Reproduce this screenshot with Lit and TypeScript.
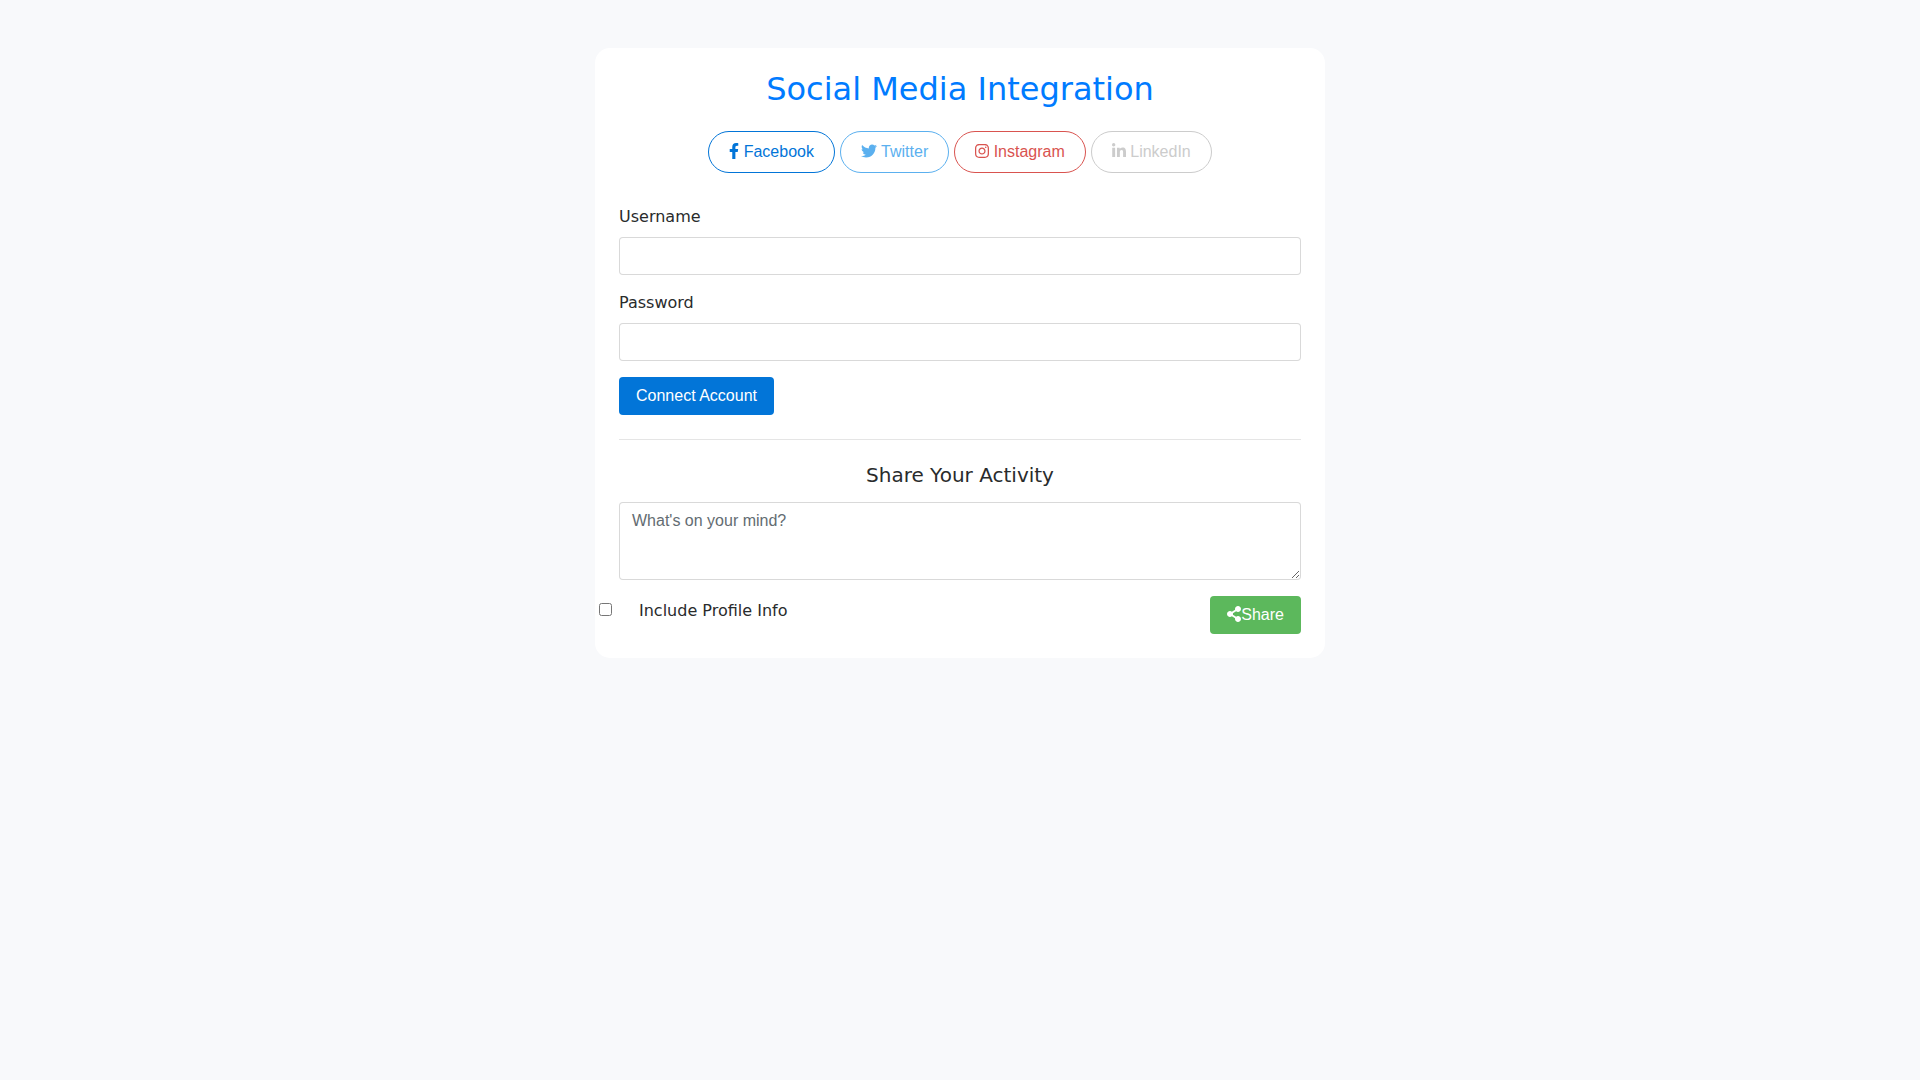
import { LitElement, html, css, svg } from "lit";
import { customElement } from "lit/decorators.js";

interface Icon {
  width: number;
  path: string;
}

// Each glyph is drawn on a 512-unit tall grid; width is in the same units.
const icons: Record<string, Icon> = {
  facebook: {
    width: 320,
    path: "M279.14 288l14.22-92.66h-88.91v-60.13c0-25.35 12.42-50.06 52.24-50.06h40.42V6.26S260.43 0 225.36 0c-73.22 0-121.08 44.38-121.08 124.72v70.62H22.89V288h81.39v224h100.17V288z",
  },
  twitter: {
    width: 512,
    path: "M459.37 151.716c.325 4.548.325 9.097.325 13.645 0 138.72-105.583 298.558-298.558 298.558-59.452 0-114.68-17.219-161.137-47.106 8.447.974 16.568 1.299 25.34 1.299 49.055 0 94.213-16.568 130.274-44.832-46.132-.975-84.792-31.188-98.112-72.772 6.498.974 12.995 1.624 19.818 1.624 9.421 0 18.843-1.3 27.614-3.573-48.081-9.747-84.143-51.98-84.143-102.985v-1.299c13.969 7.797 30.214 12.67 47.431 13.319-28.264-18.843-46.781-51.005-46.781-87.391 0-19.492 5.197-37.36 14.294-52.954 51.655 63.675 129.3 105.258 216.365 109.807-1.624-7.797-2.599-15.918-2.599-24.04 0-57.828 46.782-104.934 104.934-104.934 30.213 0 57.502 12.67 76.67 33.137 23.715-4.548 46.456-13.32 66.599-25.34-7.798 24.366-24.366 44.833-46.132 57.827 21.117-2.273 41.584-8.122 60.426-16.243-14.292 20.791-32.161 39.308-52.628 54.253z",
  },
  instagram: {
    width: 448,
    path: "M224.1 141c-63.6 0-114.9 51.3-114.9 114.9s51.3 114.9 114.9 114.9S339 319.5 339 255.9 287.7 141 224.1 141zm0 189.6c-41.1 0-74.7-33.5-74.7-74.7s33.5-74.7 74.7-74.7 74.7 33.5 74.7 74.7-33.6 74.7-74.7 74.7zm146.4-194.3c0 14.9-12 26.8-26.8 26.8-14.9 0-26.8-12-26.8-26.8s12-26.8 26.8-26.8 26.8 12 26.8 26.8zm76.1 27.2c-1.7-35.9-9.9-67.7-36.2-93.9-26.2-26.2-58-34.4-93.9-36.2-37-2.1-147.9-2.1-184.9 0-35.8 1.7-67.6 9.9-93.9 36.1s-34.4 58-36.2 93.9c-2.1 37-2.1 147.9 0 184.9 1.7 35.9 9.9 67.7 36.2 93.9s58 34.4 93.9 36.2c37 2.1 147.9 2.1 184.9 0 35.9-1.7 67.7-9.9 93.9-36.2 26.2-26.2 34.4-58 36.2-93.9 2.1-37 2.1-147.8 0-184.8zM398.8 388c-7.8 19.6-22.9 34.7-42.6 42.6-29.5 11.7-99.5 9-132.1 9s-102.7 2.6-132.1-9c-19.6-7.8-34.7-22.9-42.6-42.6-11.7-29.5-9-99.5-9-132.1s-2.6-102.7 9-132.1c7.8-19.6 22.9-34.7 42.6-42.6 29.5-11.7 99.5-9 132.1-9s102.7-2.6 132.1 9c19.6 7.8 34.7 22.9 42.6 42.6 11.7 29.5 9 99.5 9 132.1s2.7 102.7-9 132.1z",
  },
  linkedin: {
    width: 448,
    path: "M100.28 448H7.4V148.9h92.88zM53.79 108.1C24.09 108.1 0 83.5 0 53.8a53.79 53.79 0 0 1 107.58 0c0 29.7-24.1 54.3-53.79 54.3zM447.9 448h-92.68V302.4c0-34.7-.7-79.2-48.29-79.2-48.29 0-55.69 37.7-55.69 76.7V448h-92.78V148.9h89.08v40.8h1.3c12.4-23.5 42.69-48.3 87.88-48.3 94 0 111.28 61.9 111.28 142.3V448z",
  },
  share: {
    width: 448,
    path: "M352 320c-22.608 0-43.387 7.819-59.79 20.895l-102.486-64.054a96.551 96.551 0 0 0 0-41.683l102.486-64.054C308.613 184.181 329.392 192 352 192c53.019 0 96-42.981 96-96S405.019 0 352 0s-96 42.981-96 96c0 7.158.79 14.13 2.276 20.841L155.79 180.895C139.387 167.819 118.608 160 96 160c-53.019 0-96 42.981-96 96s42.981 96 96 96c22.608 0 43.387-7.819 59.79-20.895l102.486 64.054A96.301 96.301 0 0 0 256 416c0 53.019 42.981 96 96 96s96-42.981 96-96-42.981-96-96-96z",
  },
};

const networks = [
  { id: "facebook", name: "Facebook" },
  { id: "twitter", name: "Twitter" },
  { id: "instagram", name: "Instagram" },
  { id: "linkedin", name: "LinkedIn" },
];

function icon(name: string) {
  const { width, path } = icons[name];
  return html`<svg class="icon" viewBox="0 0 ${width} 512" aria-hidden="true">${svg`<path d=${path}></path>`}</svg>`;
}

@customElement("app-root")
export class AppRoot extends LitElement {
  static styles = css`
    :host {
      display: flex;
      justify-content: center;
      align-items: flex-start;
      box-sizing: border-box;
      min-height: 100vh;
      padding: 48px 16px;
      background: #f8f9fb;
      color: #292b2c;
      font-family: "DejaVu Sans", sans-serif;
      font-size: 16px;
      line-height: 24px;
    }
    *,
    *::before,
    *::after {
      box-sizing: border-box;
    }
    .card {
      flex: 0 1 730px;
      min-width: 0;
      padding: 24px;
      border-radius: 15px;
      background: #fff;
    }
    h2,
    h5 {
      margin: 0;
      font-weight: 500;
      text-align: center;
    }
    h2 {
      margin-bottom: 24px;
      color: #007bff;
      font-size: 32px;
      line-height: 35px;
    }
    h5 {
      margin-bottom: 16px;
      font-size: 20px;
      line-height: 22px;
    }
    .networks {
      display: flex;
      flex-wrap: wrap;
      justify-content: center;
      gap: 5px;
      margin-bottom: 32px;
    }
    button {
      padding: 8px 16px;
      border: 1px solid transparent;
      border-radius: 4px;
      color: #fff;
      font-family: "Liberation Sans", Arial, sans-serif;
      font-size: 16px;
      line-height: 20px;
      white-space: nowrap;
      cursor: pointer;
    }
    .network {
      padding: 10px 20px;
      border-color: currentColor;
      border-radius: 30px;
      background: transparent;
    }
    .facebook {
      color: #0275d8;
    }
    .twitter {
      color: #5bb0ef;
    }
    .instagram {
      color: #d9534f;
    }
    .linkedin {
      color: #ccc;
    }
    .primary {
      background: #0275d8;
    }
    .success {
      background: #5cb85c;
    }
    .icon {
      height: 16px;
      vertical-align: -2px;
      fill: currentColor;
    }
    .group {
      display: flex;
      flex-direction: column;
      gap: 8px;
      margin-bottom: 16px;
    }
    .control {
      display: block;
      width: 100%;
      padding: 8px 12px;
      border: 1px solid rgba(0, 0, 0, 0.15);
      border-radius: 4px;
      background: #fff;
      color: #464a4c;
      font-family: "Liberation Sans", Arial, sans-serif;
      font-size: 16px;
      line-height: 20px;
    }
    .control::placeholder {
      color: #636c72;
      opacity: 1;
    }
    textarea.control {
      margin-bottom: 16px;
      resize: vertical;
    }
    hr {
      margin: 24px 0;
      border: 0;
      border-top: 1px solid rgba(0, 0, 0, 0.1);
    }
    .actions {
      display: flex;
      justify-content: space-between;
      align-items: flex-start;
    }
    .check {
      display: flex;
      align-items: baseline;
      gap: 27px;
      margin-left: -20px;
      padding-top: 3px;
    }
    .check input {
      width: 13px;
      height: 13px;
      margin: 0;
    }
  `;

  private onSubmit(event: Event) {
    event.preventDefault();
  }

  render() {
    return html`
      <main class="card">
        <h2>Social Media Integration</h2>
        <div class="networks">
          ${networks.map(
            ({ id, name }) =>
              html`<button type="button" class="network ${id}">${icon(id)} ${name}</button>`
          )}
        </div>
        <form @submit=${this.onSubmit}>
          <div class="group">
            <label for="username">Username</label>
            <input class="control" id="username" type="text" />
          </div>
          <div class="group">
            <label for="password">Password</label>
            <input class="control" id="password" type="password" />
          </div>
          <button type="submit" class="primary">Connect Account</button>
        </form>
        <hr />
        <h5 id="share-title">Share Your Activity</h5>
        <form @submit=${this.onSubmit}>
          <textarea
            class="control"
            rows="3"
            placeholder="What's on your mind?"
            aria-labelledby="share-title"
          ></textarea>
          <div class="actions">
            <label class="check"><input type="checkbox" /><span>Include Profile Info</span></label>
            <button type="submit" class="success">${icon("share")}Share</button>
          </div>
        </form>
      </main>
    `;
  }
}
